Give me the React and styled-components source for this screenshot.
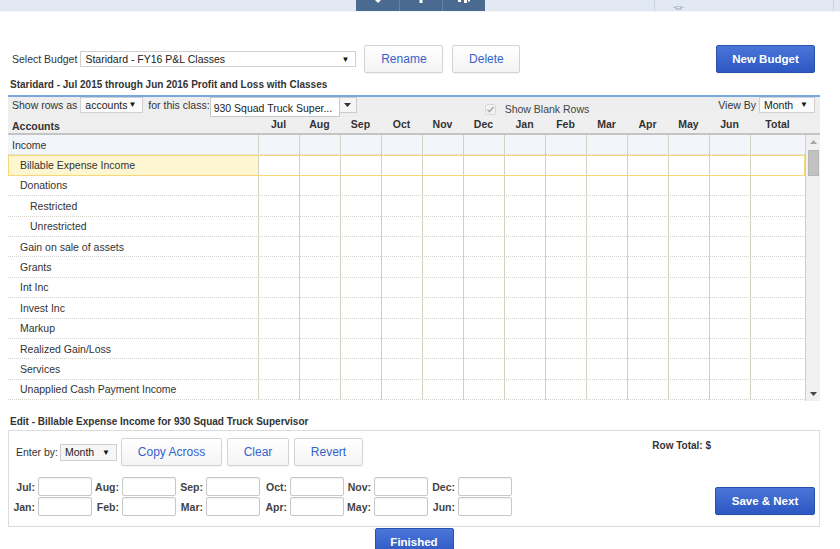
import React from "react"
import styled, { createGlobalStyle } from "styled-components"

const GlobalStyle = createGlobalStyle`
  html, body {
    margin: 0;
    padding: 0;
    background: #fff;
    overflow: hidden;
  }
  body {
    font-family: "Liberation Sans", Arial, sans-serif;
    font-size: 10.5px;
    color: #333;
  }
  * { box-sizing: border-box; }
`

const MONTHS = ["Jul", "Aug", "Sep", "Oct", "Nov", "Dec", "Jan", "Feb", "Mar", "Apr", "May", "Jun"]

const ACCOUNTS = [
  { name: "Income", level: 0, group: true },
  { name: "Billable Expense Income", level: 1, active: true },
  { name: "Donations", level: 1 },
  { name: "Restricted", level: 2 },
  { name: "Unrestricted", level: 2 },
  { name: "Gain on sale of assets", level: 1 },
  { name: "Grants", level: 1 },
  { name: "Int Inc", level: 1 },
  { name: "Invest Inc", level: 1 },
  { name: "Markup", level: 1 },
  { name: "Realized Gain/Loss", level: 1 },
  { name: "Services", level: 1 },
  { name: "Unapplied Cash Payment Income", level: 1 },
]

const FIELD_ROWS = [
  ["Jul", "Aug", "Sep", "Oct", "Nov", "Dec"],
  ["Jan", "Feb", "Mar", "Apr", "May", "Jun"],
]

const COLS = "250px repeat(12, 41px) 1fr"

/* top navigation strip */
const TopBar = styled.div`
  display: flex;
  height: 12px;
  background: #e2e9f3;
  border-bottom: 1px solid #f3f6fa;
`
const NavGroup = styled.div`
  display: flex;
  margin-left: 356px;
  height: 11px;
  background: #4a6b8f;
`
const NavButton = styled.div`
  width: 43px;
  display: flex;
  justify-content: center;
  border-left: 1px solid #6384a6;
  &:first-child { border-left: none; }
`
const RightBox = styled.div`
  margin-left: 169px;
  width: 180px;
  height: 11px;
  padding-left: 18px;
  border-left: 1px solid #c9d3e0;
  border-right: 1px solid #c9d3e0;
`

const Main = styled.main`
  padding: 0 20px 0 8px;
`

const BudgetRow = styled.div`
  display: flex;
  align-items: center;
  height: 28px;
  margin-top: 33px;
`
const Label = styled.span`
  color: #333;
  margin: 0 ${p => p.$mr ?? 3}px 0 ${p => p.$ml || 0}px;
  white-space: nowrap;
`
const FakeSelect = styled.div`
  display: flex;
  align-items: center;
  justify-content: space-between;
  width: ${p => p.$w}px;
  height: ${p => p.$h || 16}px;
  padding: 0 6px 0 4px;
  border: 1px solid #d0d0d0;
  background: ${p => p.$bg || "#fff"};
  color: #222;
  white-space: nowrap;
`
const Caret = styled.span`
  font-size: 8px;
  color: #111;
`
const Button = styled.button`
  width: ${p => p.$w}px;
  height: 28px;
  margin-left: ${p => p.$ml || 0}px;
  padding: 0;
  font-family: inherit;
  font-size: 12px;
  color: #3563cc;
  background: linear-gradient(#ffffff, #f4f4f4);
  border: 1px solid #d3d3d3;
  border-radius: 2px;
  box-shadow: 0 1px 1px rgba(0, 0, 0, 0.05);
  flex-shrink: 0;
`
const PrimaryButton = styled(Button)`
  color: #fff;
  font-weight: bold;
  font-size: 11.5px;
  background: linear-gradient(#4a76d8, #2d57c2);
  border-color: #2b51ad;
  margin-right: ${p => p.$mr || 0}px;
`
const PushRight = styled.div`
  margin-left: auto;
`

const SectionTitle = styled.div`
  font-weight: bold;
  font-size: 10px;
  line-height: 12px;
  padding-left: 2px;
  margin-top: ${p => p.$mt}px;
`

/* budget grid */
const GridPanel = styled.section`
  margin-top: 4px;
  border-top: 2px solid #78a6dd;
`
const Toolbar = styled.div`
  display: flex;
  align-items: flex-start;
  height: 20px;
  padding-left: 4px;
  background: #eeeeee;
  line-height: 16px;
`
const Combo = styled.div`
  display: flex;
  align-items: flex-start;
  margin-left: 0;
`
const ComboInput = styled.div`
  width: 130px;
  height: 20px;
  padding: 2px 0 0 3px;
  background: #fff;
  border: 1px solid #c9c9c9;
  color: #222;
  white-space: nowrap;
`
const ComboButton = styled.div`
  width: 17px;
  height: 16px;
  display: flex;
  align-items: center;
  justify-content: center;
  background: #f5f5f5;
  border: 1px solid #cccccc;
  border-left: none;
  font-size: 7px;
  color: #333;
`
const CheckGroup = styled.label`
  display: flex;
  align-items: center;
  gap: 9px;
  margin: 6px 0 0 128px;
  line-height: 12px;
  color: #444;
`
const ViewBy = styled.div`
  display: flex;
  align-items: flex-start;
  margin-left: auto;
  margin-right: 5px;
`

const HeaderRow = styled.div`
  display: grid;
  grid-template-columns: ${COLS} 15px;
  height: 18px;
  background: #efefef;
  border-bottom: 2px solid #c4c4c4;
  font-weight: bold;
  color: #333;
`
const HeadCell = styled.div`
  text-align: ${p => (p.$left ? "left" : "center")};
  padding: ${p => (p.$left ? "2px 0 0 4px" : "0")};
  line-height: 14px;
`

const BodyWrap = styled.div`
  display: flex;
  height: 266px;
`
const Rows = styled.div`
  flex: 1;
`
const Row = styled.div`
  display: grid;
  grid-template-columns: ${COLS};
  height: 20.4px;
  border-bottom: 1px dotted #d4d4cc;
  background: ${p => (p.$group ? "#f2f5fa" : "#fff")};
  outline: ${p => (p.$active ? "1px solid #f6d877" : "none")};
  outline-offset: -1px;
`
const AccountCell = styled.div`
  display: flex;
  align-items: center;
  padding-left: ${p => 4 + p.$level * 8 + (p.$level > 1 ? 2 : 0)}px;
  background: ${p => (p.$active ? "#fef6d0" : "transparent")};
  color: #333;
  white-space: nowrap;
`
const Cell = styled.div`
  border-left: 1px solid #d2d2c4;
  margin-bottom: -1px;
`
const Scrollbar = styled.div`
  width: 15px;
  display: flex;
  flex-direction: column;
  background: #f0f0f0;
  border-left: 1px solid #cfcfc2;
`
const ScrollArrow = styled.div`
  height: 14px;
  display: flex;
  align-items: center;
  justify-content: center;
`
const Thumb = styled.div`
  height: 26px;
  margin: 1px 1px 0 2px;
  background: #c2c2c2;
  border: 1px solid #b5b5b5;
`
const Spacer = styled.div`
  flex: 1;
`

/* edit panel */
const EditPanel = styled.section`
  margin-top: 2px;
  padding: 7px 3px 10px 7px;
  border: 1px solid #dcdcdc;
`
const EditTop = styled.div`
  display: flex;
  align-items: flex-start;
`
const EnterBy = styled.div`
  display: flex;
  align-items: center;
  height: 28px;
  margin-right: 4px;
`
const RowTotal = styled.div`
  margin: 2px 105px 0 auto;
  font-weight: bold;
  font-size: 10px;
  line-height: 12px;
`
const EditBottom = styled.div`
  display: flex;
  align-items: flex-end;
  margin-top: 11px;
`
const FieldGrid = styled.div`
  display: grid;
  grid-template-columns: repeat(6, 24px 54px);
  column-gap: 3px;
  row-gap: 1px;
  margin-left: -5px;
`
const FieldLabel = styled.label`
  align-self: center;
  text-align: right;
  font-weight: bold;
  color: #444;
`
const FieldInput = styled.input`
  width: 54px;
  height: 19px;
  border: 1px solid #c8c8c8;
  border-radius: 2px;
  box-shadow: inset 0 1px 1px rgba(0, 0, 0, 0.06);
  padding: 0 3px;
  font-family: inherit;
  font-size: 10.5px;
`
const SaveWrap = styled.div`
  margin: 0 1px 1px auto;
`
const FooterBar = styled.div`
  display: flex;
  justify-content: center;
  margin-top: 1px;
`

const CheckIcon = () => (
  <svg width="11" height="11" viewBox="0 0 11 11">
    <rect x="0.5" y="0.5" width="10" height="10" rx="2" fill="#f2f2f2" stroke="#d6d6d6" />
    <path d="M2.5 5.8 L4.5 7.8 L8.5 3" fill="none" stroke="#a5a5a5" strokeWidth="1.4" />
  </svg>
)

const Tri = ({ up, color }) => (
  <svg width="7" height="4" viewBox="0 0 7 4">
    <path d={up ? "M0 4 L3.5 0 L7 4 Z" : "M0 0 L7 0 L3.5 4 Z"} fill={color} />
  </svg>
)

export default function App() {
  return (
    <>
      <GlobalStyle />
      <TopBar>
        <NavGroup>
          <NavButton>
            <svg width="12" height="4" viewBox="0 0 12 4">
              <path d="M3 0 H9 L6 3 Z" fill="#fff" />
            </svg>
          </NavButton>
          <NavButton>
            <svg width="6" height="4" viewBox="0 0 6 4">
              <rect x="1.5" y="0" width="3" height="3" fill="#fff" />
            </svg>
          </NavButton>
          <NavButton>
            <svg width="18" height="4" viewBox="0 0 18 4">
              <rect x="3" y="0" width="3" height="2" fill="#fff" />
              <rect x="9" y="0" width="3" height="3" fill="#fff" />
              <rect x="13" y="0" width="2" height="1.5" fill="#fff" />
            </svg>
          </NavButton>
        </NavGroup>
        <RightBox>
          <svg width="12" height="4" viewBox="0 0 12 4">
            <rect x="3" y="0" width="5" height="3" fill="none" stroke="#9aa8bb" />
            <rect x="0" y="1" width="2" height="1" fill="#b5c0cf" />
            <rect x="9" y="1" width="2" height="1" fill="#b5c0cf" />
          </svg>
        </RightBox>
      </TopBar>

      <Main>
        <BudgetRow>
          <Label $ml={4}>Select Budget</Label>
          <FakeSelect $w={276}>
            Staridard - FY16 P&amp;L Classes
            <Caret>▼</Caret>
          </FakeSelect>
          <Button $w={79} $ml={8}>Rename</Button>
          <Button $w={68} $ml={9}>Delete</Button>
          <PushRight>
            <PrimaryButton $w={99} $mr={5}>New Budget</PrimaryButton>
          </PushRight>
        </BudgetRow>

        <SectionTitle $mt={6}>
          Staridard - Jul 2015 through Jun 2016 Profit and Loss with Classes
        </SectionTitle>

        <GridPanel>
          <Toolbar>
            <Label $mr={3}>Show rows as</Label>
            <FakeSelect $w={63} $bg="#fafafa">
              accounts
              <Caret>▼</Caret>
            </FakeSelect>
            <Label $ml={5} $mr={0}>for this class:</Label>
            <Combo>
              <ComboInput>930 Squad Truck Super...</ComboInput>
              <ComboButton>
                <Tri color="#333" />
              </ComboButton>
            </Combo>
            <CheckGroup>
              <CheckIcon />
              Show Blank Rows
            </CheckGroup>
            <ViewBy>
              <Label $mr={3}>View By</Label>
              <FakeSelect $w={56} $bg="#fafafa">
                Month
                <Caret>▼</Caret>
              </FakeSelect>
            </ViewBy>
          </Toolbar>

          <HeaderRow>
            <HeadCell $left>Accounts</HeadCell>
            {MONTHS.map(m => (
              <HeadCell key={m}>{m}</HeadCell>
            ))}
            <HeadCell>Total</HeadCell>
            <div />
          </HeaderRow>

          <BodyWrap>
            <Rows>
              {ACCOUNTS.map(a => (
                <Row key={a.name} $group={a.group} $active={a.active}>
                  <AccountCell $level={a.level} $active={a.active}>
                    {a.name}
                  </AccountCell>
                  {MONTHS.map(m => (
                    <Cell key={m} />
                  ))}
                  <Cell />
                </Row>
              ))}
            </Rows>
            <Scrollbar>
              <ScrollArrow>
                <Tri up color="#a8a8a8" />
              </ScrollArrow>
              <Thumb />
              <Spacer />
              <ScrollArrow>
                <Tri color="#444" />
              </ScrollArrow>
            </Scrollbar>
          </BodyWrap>
        </GridPanel>

        <SectionTitle $mt={15}>
          Edit - Billable Expense Income for 930 Squad Truck Supervisor
        </SectionTitle>

        <EditPanel>
          <EditTop>
            <EnterBy>
              <Label $mr={2}>Enter by:</Label>
              <FakeSelect $w={57} $h={17} $bg="#f6f6f6">
                Month
                <Caret>▼</Caret>
              </FakeSelect>
            </EnterBy>
            <Button $w={101}>Copy Across</Button>
            <Button $w={62} $ml={5}>Clear</Button>
            <Button $w={69} $ml={5}>Revert</Button>
            <RowTotal>Row Total: $</RowTotal>
          </EditTop>

          <EditBottom>
            <FieldGrid>
              {FIELD_ROWS.map(row =>
                row.map(m => (
                  <React.Fragment key={m}>
                    <FieldLabel>{m}:</FieldLabel>
                    <FieldInput type="text" />
                  </React.Fragment>
                ))
              )}
            </FieldGrid>
            <SaveWrap>
              <PrimaryButton $w={100}>Save &amp; Next</PrimaryButton>
            </SaveWrap>
          </EditBottom>
        </EditPanel>

        <FooterBar>
          <PrimaryButton $w={79}>Finished</PrimaryButton>
        </FooterBar>
      </Main>
    </>
  )
}
